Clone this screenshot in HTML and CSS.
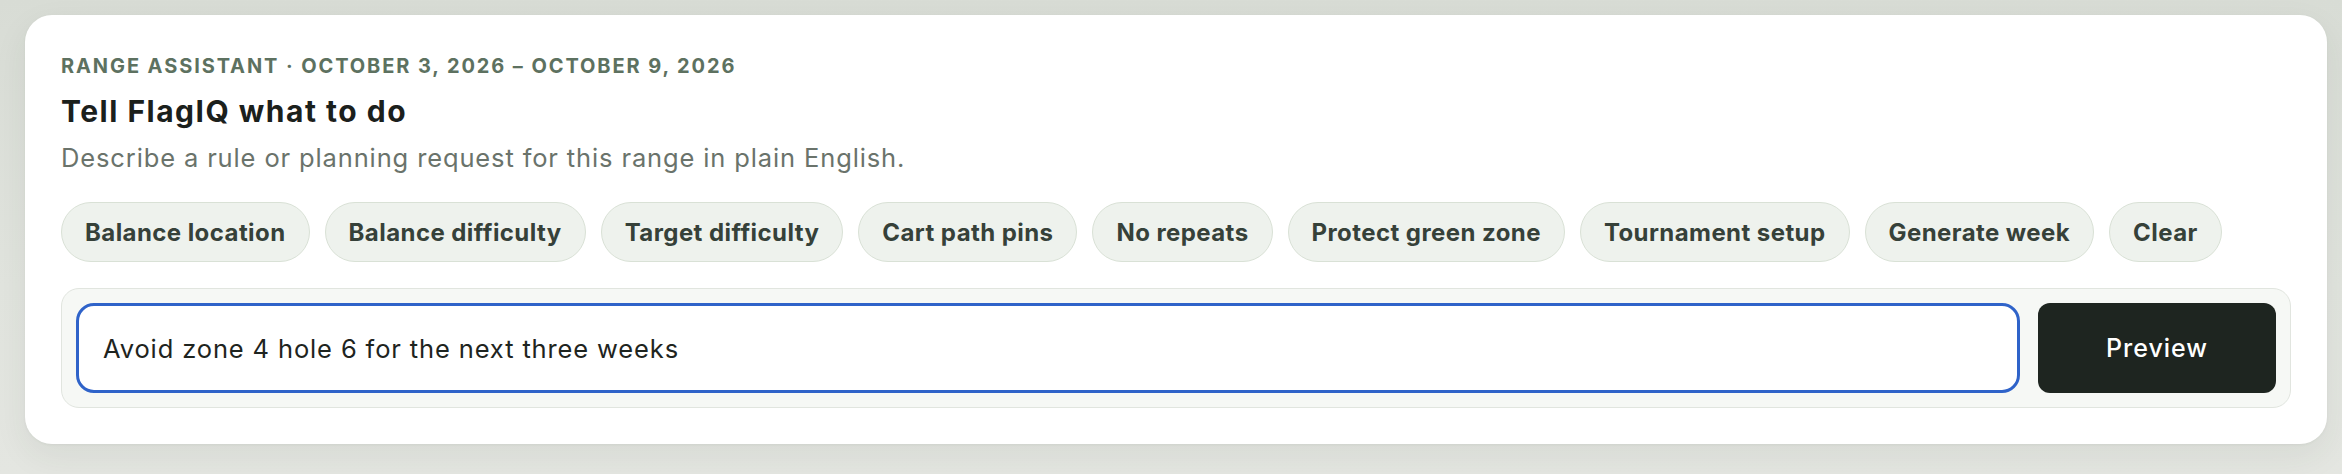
FILE: index.html
```html
<!DOCTYPE html>
<html lang="en">
<head>
<meta charset="utf-8">
<title>Range Assistant</title>
<link rel="stylesheet" href="styles.css">
</head>
<body>
<main class="page">
  <section class="card">
    <p class="eyebrow">Range assistant · October 3, 2026 – October 9, 2026</p>
    <h1 class="title">Tell FlagIQ what to do</h1>
    <p class="subtitle">Describe a rule or planning request for this range in plain English.</p>
    <div class="chips">
      <button class="chip" type="button">Balance location</button>
      <button class="chip" type="button">Balance difficulty</button>
      <button class="chip" type="button">Target difficulty</button>
      <button class="chip" type="button">Cart path pins</button>
      <button class="chip" type="button">No repeats</button>
      <button class="chip" type="button">Protect green zone</button>
      <button class="chip" type="button">Tournament setup</button>
      <button class="chip" type="button">Generate week</button>
      <button class="chip" type="button">Clear</button>
    </div>
    <form class="composer">
      <input class="prompt" type="text" value="Avoid zone 4 hole 6 for the next three weeks">
      <button class="preview" type="button">Preview</button>
    </form>
  </section>
</main>
</body>
</html>
```

FILE: styles.css
```css
* {
  box-sizing: border-box;
}

html, body {
  margin: 0;
  padding: 0;
}

body {
  width: 2342px;
  height: 474px;
  overflow: hidden;
  font-family: Inter, "Liberation Sans", sans-serif;
  background: linear-gradient(180deg, #d8dcd5 0%, #e1e4de 60%, #e4e6e1 100%);
}

.page {
  padding: 15px 15px 0 25px;
}

.card {
  background: #ffffff;
  border-radius: 27px;
  padding: 36px;
  box-shadow: 0 12px 34px rgba(40, 52, 40, 0.07), 0 1px 3px rgba(40, 52, 40, 0.05);
}

.eyebrow {
  margin: 0;
  font-size: 20px;
  line-height: 30px;
  font-weight: 700;
  letter-spacing: 0.095em;
  text-transform: uppercase;
  color: #5d7160;
}

.title {
  margin: 12px 0 0;
  font-size: 30px;
  line-height: 36px;
  font-weight: 700;
  letter-spacing: 0.05em;
  color: #1b201c;
}

.subtitle {
  margin: 13px 0 0;
  font-size: 25.5px;
  line-height: 32px;
  font-weight: 400;
  letter-spacing: 0.034em;
  color: #6a736b;
}

.chips {
  display: flex;
  flex-wrap: wrap;
  gap: 15px;
  margin-top: 28px;
}

.chip {
  height: 60px;
  padding: 0 23px;
  border: 1px solid #d9e1d6;
  border-radius: 30px;
  background: #eef2ed;
  font-family: inherit;
  font-size: 24px;
  font-weight: 700;
  letter-spacing: 0.0177em;
  color: #364139;
  cursor: pointer;
}

.composer {
  display: flex;
  gap: 18px;
  margin: 26px 0 0;
  padding: 14px;
  border: 1px solid #e1e5df;
  border-radius: 18px;
  background: #f6f8f5;
}

.prompt {
  flex: 1;
  height: 90px;
  padding: 0 24px;
  border: 3px solid #2f63c9;
  border-radius: 18px;
  background: #ffffff;
  font-family: inherit;
  font-size: 25.5px;
  letter-spacing: 0.034em;
  color: #1e2420;
  outline: none;
}

.preview {
  width: 238px;
  height: 90px;
  border: none;
  border-radius: 12px;
  background: #1e2520;
  color: #ffffff;
  font-family: inherit;
  font-size: 25px;
  font-weight: 500;
  letter-spacing: 0.04em;
  cursor: pointer;
}
```
